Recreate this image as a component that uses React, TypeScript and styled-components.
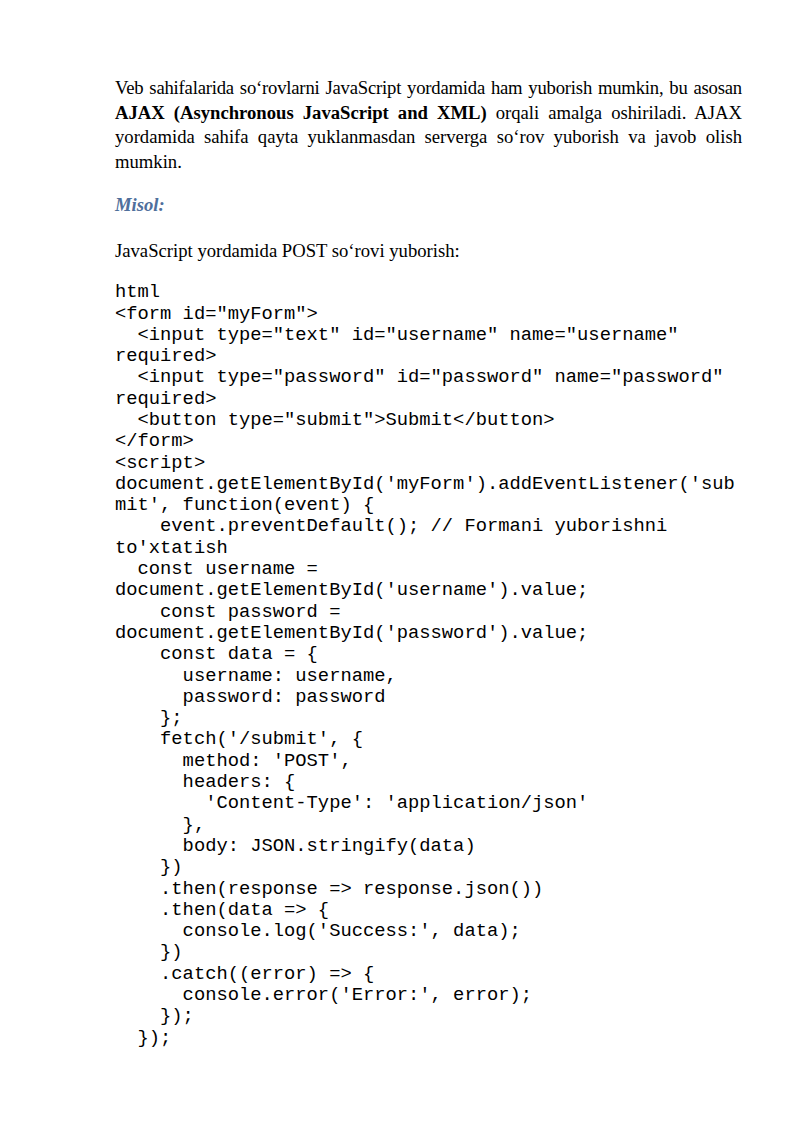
import React from "react";
import styled, { createGlobalStyle } from "styled-components";

const GlobalStyle = createGlobalStyle`
  html, body { margin: 0; padding: 0; background: #ffffff; }
  body { font-family: "Liberation Serif", "Times New Roman", serif; color: #000; }
`;

const Page = styled.main`
  width: 800px;
  min-height: 1131px;
  box-sizing: border-box;
  padding: 76px 58px 40px 115px;
  display: flex;
  flex-direction: column;
`;

const Paragraph = styled.p<{ $gap?: number; $justify?: boolean }>`
  margin: 0 0 ${(p) => p.$gap ?? 0}px 0;
  font-size: 18.67px;
  line-height: 24.7px;
  text-align: ${(p) => (p.$justify ? "justify" : "left")};
`;

const Tight = styled.span`
  letter-spacing: -0.2px;
`;

const Heading = styled.p`
  margin: 0 0 21px 0;
  font-size: 18.67px;
  line-height: 24.7px;
  font-weight: bold;
  font-style: italic;
  color: #4f6f9c;
`;

const Code = styled.pre`
  margin: 0;
  font-family: "Liberation Mono", "Courier New", monospace;
  font-size: 18.8px;
  line-height: 21.3px;
  color: #000;
  white-space: pre;
`;

const codeLines = [
  "html",
  '<form id="myForm">',
  '  <input type="text" id="username" name="username"',
  "required>",
  '  <input type="password" id="password" name="password"',
  "required>",
  '  <button type="submit">Submit</button>',
  "</form>",
  "<script>",
  "document.getElementById('myForm').addEventListener('sub",
  "mit', function(event) {",
  "    event.preventDefault(); // Formani yuborishni",
  "to'xtatish",
  "  const username =",
  "document.getElementById('username').value;",
  "    const password =",
  "document.getElementById('password').value;",
  "    const data = {",
  "      username: username,",
  "      password: password",
  "    };",
  "    fetch('/submit', {",
  "      method: 'POST',",
  "      headers: {",
  "        'Content-Type': 'application/json'",
  "      },",
  "      body: JSON.stringify(data)",
  "    })",
  "    .then(response => response.json())",
  "    .then(data => {",
  "      console.log('Success:', data);",
  "    })",
  "    .catch((error) => {",
  "      console.error('Error:', error);",
  "    });",
  "  });",
];

export default function App() {
  return (
    <>
      <GlobalStyle />
      <Page>
        <Paragraph $justify $gap={18}>
          <Tight>
            Veb sahifalarida so‘rovlarni JavaScript yordamida ham yuborish mumkin, bu asosan
          </Tight>{" "}
          <b>AJAX (Asynchronous JavaScript and XML)</b> orqali amalga oshiriladi. AJAX
          yordamida sahifa qayta yuklanmasdan serverga so‘rov yuborish va javob olish
          mumkin.
        </Paragraph>
        <Heading>Misol:</Heading>
        <Paragraph $gap={19}>JavaScript yordamida POST so‘rovi yuborish:</Paragraph>
        <Code>{codeLines.join("\n")}</Code>
      </Page>
    </>
  );
}
